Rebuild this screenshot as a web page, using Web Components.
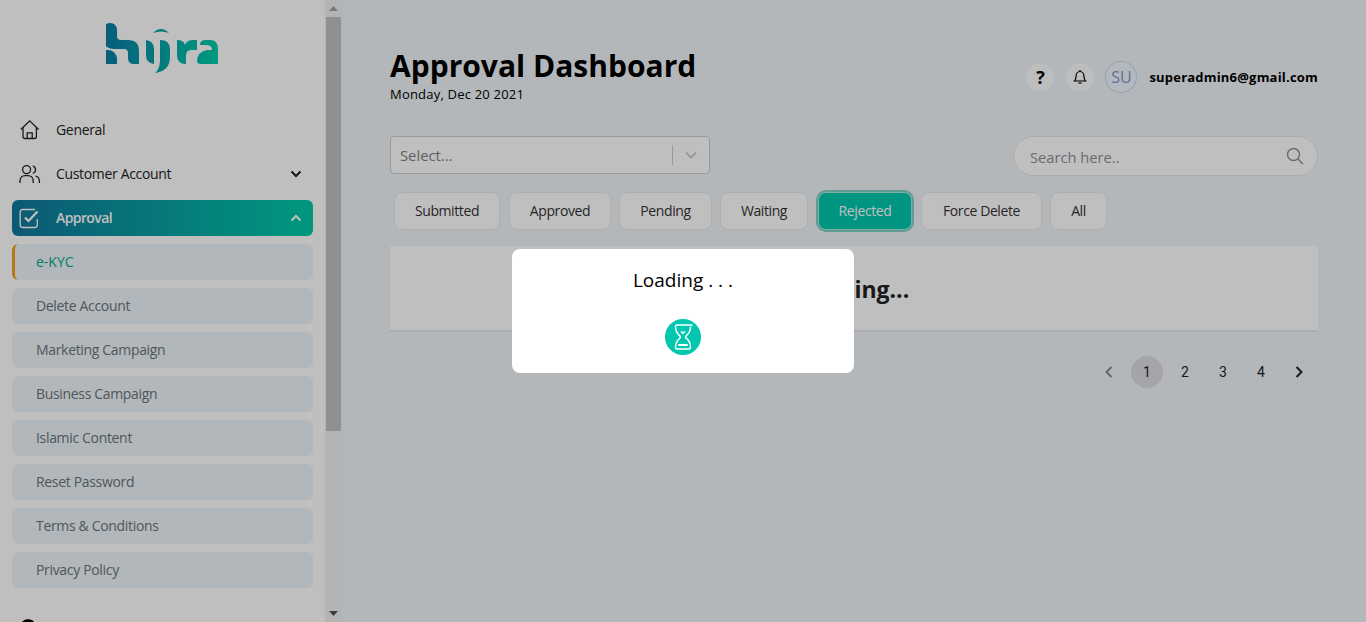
<!DOCTYPE html>
<html>
<head>
<meta charset="utf-8">
<title>Approval Dashboard</title>
<style>
html, body {
	margin   : 0;
	height   : 100%;
	overflow : hidden;
}
body {
	display     : flex;
	font-family : "Open Sans", "Noto Sans", sans-serif;
	font-size   : 14px;
	color       : #000;
	background  : #f0f5f8;
}
</style>
</head>
<body>
<hj-sidebar>
	<hj-logo></hj-logo>
	<hj-nav icon="home">General</hj-nav>
	<hj-nav icon="users" caret="down">Customer Account</hj-nav>
	<hj-nav icon="check" caret="up" active>Approval</hj-nav>
	<hj-sub current>e-KYC</hj-sub>
	<hj-sub>Delete Account</hj-sub>
	<hj-sub>Marketing Campaign</hj-sub>
	<hj-sub>Business Campaign</hj-sub>
	<hj-sub>Islamic Content</hj-sub>
	<hj-sub>Reset Password</hj-sub>
	<hj-sub>Terms &amp; Conditions</hj-sub>
	<hj-sub>Privacy Policy</hj-sub>
	<hj-nav icon="person" class="last"></hj-nav>
</hj-sidebar>
<hj-main>
	<hj-header title="Approval Dashboard" date="Monday, Dec 20 2021" email="superadmin6@gmail.com" initials="SU"></hj-header>
	<hj-filters></hj-filters>
	<hj-tabs>
		<hj-tab w="106">Submitted</hj-tab>
		<hj-tab w="102" style="margin-left:1px">Approved</hj-tab>
		<hj-tab w="93">Pending</hj-tab>
		<hj-tab w="88">Waiting</hj-tab>
		<hj-tab w="94" selected>Rejected</hj-tab>
		<hj-tab w="121">Force Delete</hj-tab>
		<hj-tab w="57">All</hj-tab>
	</hj-tabs>
	<hj-table>Loading...</hj-table>
	<hj-pager pages="4" current="1"></hj-pager>
</hj-main>
<hj-modal>Loading . . .</hj-modal>

<script>
const ICONS = {
	home   : `<path d="M1.800 10.500 10.700 1.800l8.900 8.700"/><path d="M4 8.500v9c0 1.300.8 2 2 2h9.400c1.200 0 2-.7 2-2v-9"/><path d="M8.200 19.500v-5.700h5v5.700"/>`,
	users  : `<path d="M1 20v-2.200c0-3 2.300-5.200 5.200-5.200h2.800c2.900 0 5.200 2.200 5.200 5.200V20"/><circle cx="7.600" cy="6.600" r="4"/><path d="M13.800 2.800a4 4 0 0 1 0 7.600"/><path d="M16.600 13c2.300.7 3.800 2.600 3.800 5v2"/>`,
	check  : `<path d="M18.300 12v6c0 1.500-1 2.500-2.500 2.500H3.700c-1.500 0-2.500-1-2.500-2.500V5c0-1.500 1-2.500 2.500-2.500H16" stroke-width="1.300"/><path d="M6 10.500l3.500 3.500 9-9.500" stroke-width="2.200"/>`,
	person : `<path d="M3 10V6C3 2.500 5.500 1 9 1s6 1.500 6 5v4z" fill="currentColor"/>`
};

class HjElement extends HTMLElement
{
	constructor ()
	{
		super();
		this.attachShadow ({mode:"open"});
	}

	connectedCallback ()
	{
		this.shadowRoot.innerHTML = this.render();
	}
}

class HjSidebar extends HjElement
{
	render ()
	{
		return `
			<style>
			:host {
				flex     : none;
				display  : flex;
				width    : 342px;
				height   : 622px;
				overflow : hidden;
				background : #fff;
			}
			.items {
				flex    : 1;
				display : flex;
				flex-direction : column;
				padding : 0 12px;
				min-width : 0;
			}
			</style>
			<div class="items"><slot></slot></div>
			<hj-scrollbar></hj-scrollbar>
		`;
	}
}

class HjScrollbar extends HjElement
{
	render ()
	{
		return `
			<style>
			:host {
				flex    : none;
				width   : 17px;
				height  : 622px;
				display : flex;
				flex-direction : column;
				background : #f1f1f1;
			}
			.btn {
				flex : none;
				height : 17px;
				display : flex;
				align-items : center;
				justify-content : center;
			}
			.thumb {
				flex : none;
				height : 414px;
				margin : 0 1px;
				background : #c1c1c1;
			}
			.rest { flex : 1; }
			</style>
			<div class="btn"><svg width="9" height="5"><path d="M0 5 4.500 0 9 5z" fill="#a3a3a3"/></svg></div>
			<div class="thumb"></div>
			<div class="rest"></div>
			<div class="btn"><svg width="9" height="5"><path d="M0 0 4.500 5 9 0z" fill="#505050"/></svg></div>
		`;
	}
}

class HjLogo extends HjElement
{
	render ()
	{
		return `
			<style>
			:host {
				display : flex;
				justify-content : center;
				padding : 23px 0 39px;
				margin-right : 1px;
			}
			svg { display : block; }
			</style>
			<svg width="113" height="50" viewBox="106 23 113 50">
				<defs>
					<linearGradient id="lg" gradientUnits="userSpaceOnUse" x1="106" y1="0" x2="218" y2="0">
						<stop offset="0" stop-color="#0a7ea6"/>
						<stop offset="1" stop-color="#00cda9"/>
					</linearGradient>
				</defs>
				<g fill="url(#lg)">
					<path d="M106 25q0-2 4-2 7 0 7 8v5q0 4 4 4h7q11 0 11 11v13h-5q-6 0-6-6v-5q0-4-4-4h-10q-7 0-14-8z"/>
					<path d="M106 50q9-1 11 8v6h-11z"/>
					<path d="M146 40q8 1 8 9v15q-8-1-8-9z"/>
					<path d="M153 33q8-8 16 0-8-3-16 0z"/>
					<path d="M160 40q10 0 10 9v8q0 14-15 16 5-4 5-13z"/>
					<path d="M177 40q7 0 8 5 2-5 8-5h4v10h-6q-5 0-5 6v8q-9 0-9-9z"/>
					<path d="M206 40h4q8 0 8 9v15h-17q-4 0-4-3 0-9 10-11h5q0-5-6-5h-6q0-5 6-5z"/>
				</g>
			</svg>
		`;
	}
}

class HjNav extends HjElement
{
	render ()
	{
		let active = this.hasAttribute("active");
		let icon   = ICONS[this.getAttribute("icon")];
		let caret  = this.getAttribute("caret");
		let c = "";
		if (caret == "down") c = `<svg class="caret" width="12" height="8" viewBox="0 0 12 8"><path d="M1.500 1.500 6 6l4.500-4.500"/></svg>`;
		if (caret == "up") c = `<svg class="caret" width="12" height="8" viewBox="0 0 12 8"><path d="M1.500 6.500 6 2l4.500 4.500"/></svg>`;
		return `
			<style>
			:host {
				display : flex;
				align-items : center;
				flex : none;
				height : 36px;
				margin-bottom : 8px;
				padding : 0 11px 0 7px;
				border-radius : 6px;
				font-size : 14px;
				letter-spacing : -.33px;
				color : ${active ? "#fff" : "#222"};
				background : ${active ? "linear-gradient(90deg,#11779c,#00cba9)" : "none"};
				${active ? "font-weight:600;letter-spacing:-.6px;" : ""}
			}
			:host(.last) { margin-top : 16px; color : #000; }
			.ico {
				flex : none;
				width : 22px;
				height : 22px;
				margin-right : 15px;
				fill : none;
				stroke : currentColor;
				stroke-width : 1.300;
			}
			.label { padding-bottom : 2px; }
			.caret {
				margin-left : auto;
				fill : none;
				stroke : currentColor;
				stroke-width : 2;
			}
			</style>
			<svg class="ico" viewBox="0 0 22 22">${icon}</svg>
			<span class="label"><slot></slot></span>
			${c}
		`;
	}
}

class HjSub extends HjElement
{
	render ()
	{
		let cur = this.hasAttribute("current");
		return `
			<style>
			:host {
				flex : none;
				display : flex;
				align-items : center;
				height : 36px;
				box-sizing : border-box;
				margin-bottom : 8px;
				padding : 0 0 2px ${cur ? 21 : 24}px;
				border-radius : 6px;
				background : #edf5f8;
				font-size : 14px;
				color : ${cur ? "#00a88e" : "#6d7378"};
				letter-spacing : -.33px;
				${cur ? "border-left:3px solid #f5a11a;letter-spacing:0;" : ""}
			}
			</style>
			<slot></slot>
		`;
	}
}

class HjMain extends HjElement
{
	render ()
	{
		return `
			<style>
			:host {
				flex : 1;
				min-width : 0;
				display : flex;
				flex-direction : column;
				padding : 46px 48px 0;
			}
			</style>
			<slot></slot>
		`;
	}
}

class HjHeader extends HjElement
{
	render ()
	{
		return `
			<style>
			:host {
				display : flex;
				justify-content : space-between;
				align-items : flex-start;
				height : 90px;
			}
			h1 {
				margin : 0;
				font-size : 30px;
				line-height : 40px;
				font-weight : 700;
			}
			p {
				margin : 0;
				font-size : 13px;
				line-height : 18px;
				margin-top : -1px;
				letter-spacing : .2px;
			}
			.user {
				display : flex;
				align-items : center;
				margin-top : 15px;
			}
			.round {
				width : 28px;
				height : 28px;
				border-radius : 50%;
				background : rgba(255,255,255,.72);
				display : flex;
				align-items : center;
				justify-content : center;
				margin-right : 12px;
				font : 700 18px "Open Sans", sans-serif;
				color : #000;
			}
			.avatar {
				box-sizing : border-box;
				width : 32px;
				height : 32px;
				margin-left : -1px;
				border-radius : 50%;
				border : 1px dotted #9db3df;
				background : #f0f7ff;
				color : #8a94c8;
				font-size : 16px;
				display : flex;
				align-items : center;
				justify-content : center;
			}
			.email {
				margin-left : 12px;
				font-size : 13px;
				font-weight : 700;
				letter-spacing : .2px;
			}
			</style>
			<div>
				<h1>${this.getAttribute("title")}</h1>
				<p>${this.getAttribute("date")}</p>
			</div>
			<div class="user">
				<div class="round">?</div>
				<div class="round"><svg width="16" height="16" viewBox="0 0 16 16" fill="none" stroke="#000" stroke-width="1.200"><path d="M2.500 12c1-1 1.500-2 1.500-4.500C4 4.500 5.800 2.500 8 2.500s4 2 4 5c0 2.500.5 3.500 1.500 4.500z"/><path d="M6.500 14h3"/><path d="M8 1v1.500"/></svg></div>
				<div class="avatar">${this.getAttribute("initials")}</div>
				<div class="email">${this.getAttribute("email")}</div>
			</div>
		`;
	}
}

class HjFilters extends HjElement
{
	render ()
	{
		return `
			<style>
			:host {
				display : flex;
				justify-content : space-between;
				align-items : flex-start;
				height : 56px;
			}
			.select {
				box-sizing : border-box;
				width : 320px;
				height : 38px;
				display : flex;
				align-items : center;
				padding-left : 9px;
				border : 1px solid #ccc;
				border-radius : 4px;
				background : #fff;
				color : #808080;
				font-size : 14.800px;
			}
			.sep {
				margin-left : auto;
				width : 1px;
				height : 20px;
				background : #ccc;
			}
			.arrow {
				width : 36px;
				display : flex;
				justify-content : center;
			}
			.search {
				box-sizing : border-box;
				width : 305px;
				height : 40px;
				display : flex;
				align-items : center;
				padding : 1px 13px 0 16px;
				border : 1px solid #e4e6ea;
				border-radius : 20px;
				background : #fff;
				color : #8b9099;
				font-size : 14.700px;
			}
			.search svg { margin-left : auto; margin-top : -2px; }
			</style>
			<div class="select">
				Select...
				<span class="sep"></span>
				<span class="arrow"><svg width="12" height="8" viewBox="0 0 12 8" fill="none" stroke="#ccc" stroke-width="2"><path d="M1 1.500 6 6.500l5-5"/></svg></span>
			</div>
			<div class="search">
				Search here..
				<svg width="18" height="18" viewBox="0 0 18 18" fill="none" stroke="#8b9099" stroke-width="1.500"><circle cx="7.500" cy="7.500" r="6"/><path d="M12 12l5 5"/></svg>
			</div>
		`;
	}
}

class HjTabs extends HjElement
{
	render ()
	{
		return `
			<style>
			:host {
				display : flex;
				height : 54px;
				padding-left : 4px;
				gap : 8px;
			}
			</style>
			<slot></slot>
		`;
	}
}

class HjTab extends HjElement
{
	render ()
	{
		let sel = this.hasAttribute("selected");
		return `
			<style>
			:host {
				box-sizing : border-box;
				width : ${this.getAttribute("w")}px;
				height : 38px;
				padding-bottom : 2px;
				display : flex;
				align-items : center;
				justify-content : center;
				border-radius : 8px;
				border : 1px solid ${sel ? "#a9e9df" : "#e8e8e8"};
				background : ${sel ? "#00c7ab" : "#fff"};
				color : ${sel ? "#fff" : "#333"};
				font-size : 14px;
				letter-spacing : -.4px;
				${sel ? "box-shadow:0 0 0 2px #80d0c5;margin:0 1px 0 2px;" : ""}
			}
			</style>
			<slot></slot>
		`;
	}
}

class HjTable extends HjElement
{
	render ()
	{
		return `
			<style>
			:host {
				box-sizing : border-box;
				height : 86px;
				padding-top : 2px;
				display : flex;
				align-items : center;
				justify-content : center;
				background : #fff;
				border-bottom : 2px solid #e6e6f4;
				font-size : 23px;
				font-weight : 700;
				color : #222;
			}
			</style>
			<slot></slot>
		`;
	}
}

class HjPager extends HjElement
{
	render ()
	{
		let n = parseInt(this.getAttribute("pages"));
		let c = parseInt(this.getAttribute("current"));
		let html = "";
		for (let i = 1; i <= n; i++) {
			html += `<span class="p ${i == c ? "on" : ""}">${i}</span>`;
		}
		return `
			<style>
			:host {
				display : flex;
				justify-content : flex-end;
				margin-top : 24px;
				padding-right : 3px;
				gap : 6px;
			}
			.p {
				width : 32px;
				height : 32px;
				border-radius : 50%;
				display : flex;
				align-items : center;
				justify-content : center;
				font : 14px Roboto, sans-serif;
				color : #222;
			}
			.on { background : #dcdde2; }
			</style>
			<span class="p"><svg width="8" height="12" viewBox="0 0 8 12" fill="none" stroke="#8a8a8a" stroke-width="2"><path d="M6.500 1 1.500 6l5 5"/></svg></span>
			${html}
			<span class="p"><svg width="8" height="12" viewBox="0 0 8 12" fill="none" stroke="#222" stroke-width="2"><path d="M1.500 1l5 5-5 5"/></svg></span>
		`;
	}
}

class HjModal extends HjElement
{
	render ()
	{
		return `
			<style>
			:host {
				position : fixed;
				inset : 0;
				display : flex;
				align-items : center;
				justify-content : center;
				background : rgba(0,0,0,.25);
			}
			.box {
				width : 342px;
				height : 124px;
				box-sizing : border-box;
				padding-top : 18px;
				background : #fff;
				border-radius : 8px;
				display : flex;
				flex-direction : column;
				align-items : center;
				font-size : 19px;
				line-height : 27px;
			}
			svg { margin-top : 25px; }
			</style>
			<div class="box">
				<div><slot></slot></div>
				<svg width="36" height="36" viewBox="0 0 36 36">
					<circle cx="18" cy="18" r="18" fill="#00c7ae"/>
					<path d="M27 6H12c-1 0-1.500.5-1.500 1.500 0 4 1.500 7 4.300 9.300.7.600.7 1.800 0 2.400-2.800 2.300-4.300 5.300-4.300 9.300 0 1 .5 1.500 1.500 1.500h12c1 0 1.500-.5 1.500-1.500 0-4-1.500-7-4.300-9.300-.7-.6-.7-1.800 0-2.400 2.800-2.300 4.300-5.300 4.300-8.800" fill="none" stroke="#fff" stroke-width="1.500" stroke-linecap="round"/>
					<path d="M14 26h8" stroke="#fff" stroke-width="2" stroke-linecap="round"/>
					<path d="M15 12.500h6L18 15.500z" fill="#fff"/>
				</svg>
			</div>
		`;
	}
}

customElements.define("hj-sidebar", HjSidebar);
customElements.define("hj-scrollbar", HjScrollbar);
customElements.define("hj-logo", HjLogo);
customElements.define("hj-nav", HjNav);
customElements.define("hj-sub", HjSub);
customElements.define("hj-main", HjMain);
customElements.define("hj-header", HjHeader);
customElements.define("hj-filters", HjFilters);
customElements.define("hj-tabs", HjTabs);
customElements.define("hj-tab", HjTab);
customElements.define("hj-table", HjTable);
customElements.define("hj-pager", HjPager);
customElements.define("hj-modal", HjModal);
</script>
</body>
</html>
